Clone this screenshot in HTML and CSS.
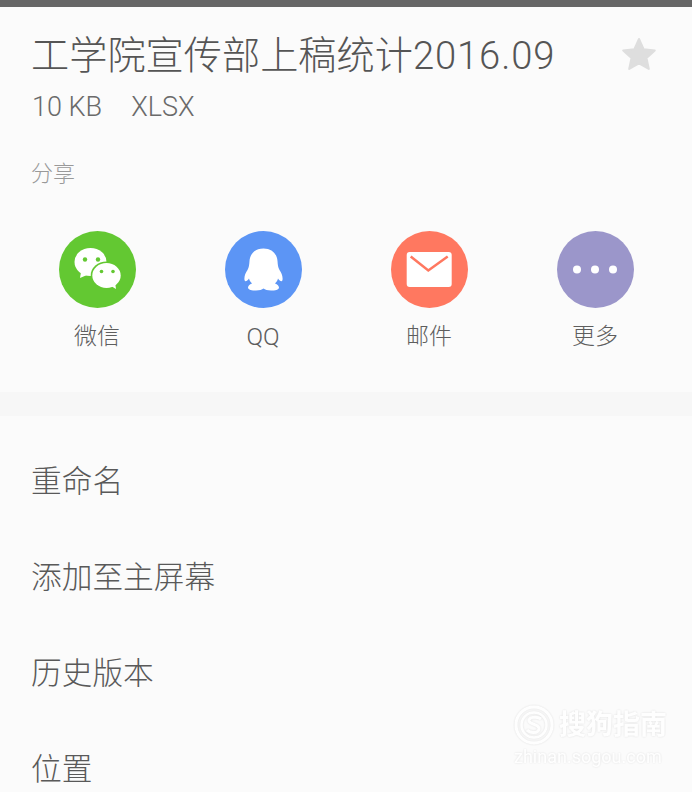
FILE: index.html
```html
<!DOCTYPE html>
<html lang="zh-CN">
<head>
<meta charset="utf-8">
<title>文件详情</title>
<link rel="stylesheet" href="styles.css">
</head>
<body>
<div class="sheet">
  <header class="head">
    <div class="title-row">
      <h1 class="title">工学院宣传部上稿统计<span class="title-num">2016.09</span></h1>
      <svg class="star" viewBox="0 0 36 36"><path d="M18 3l4.600 10.200 11.200 1.200-8.300 7.500 2.300 11-9.800-5.600-9.800 5.600 2.300-11-8.300-7.500 11.200-1.200z" fill="#dedede" stroke="#dedede" stroke-width="2" stroke-linejoin="round"/></svg>
    </div>
    <div class="meta"><span>10 KB</span><span>XLSX</span></div>
  </header>
  <section class="share">
    <div class="share-label">分享</div>
    <div class="share-grid">
      <div class="share-item">
        <svg class="share-icon" viewBox="0 0 77 77">
          <circle cx="38.500" cy="38.500" r="38.500" fill="#63c832"/>
          <ellipse cx="31.500" cy="31" rx="16" ry="14" fill="#fff"/>
          <path d="M22 41l-1 6 7-3z" fill="#fff"/>
          <ellipse cx="47.500" cy="44.500" rx="15.800" ry="14" fill="#63c832"/>
          <ellipse cx="47.500" cy="44.500" rx="14.200" ry="12.500" fill="#fff"/>
          <path d="M52 55l5 3-1-7z" fill="#fff"/>
          <circle cx="26" cy="28.500" r="2.200" fill="#63c832"/>
          <circle cx="39" cy="28.500" r="2.200" fill="#63c832"/>
          <circle cx="42.500" cy="40.500" r="1.800" fill="#63c832"/>
          <circle cx="54" cy="40.500" r="1.800" fill="#63c832"/>
        </svg>
        <span class="share-name">微信</span>
      </div>
      <div class="share-item">
        <svg class="share-icon" viewBox="0 0 77 77">
          <circle cx="38.500" cy="38.500" r="38.500" fill="#5c95f5"/>
          <path d="M38.500 17.500C30 17.500 25 23 24.500 30C24.200 34 24 36 22.500 39C20.500 42 19 45 19.500 49C20 51 22 50.500 24 47.500C24.500 49.500 25.500 51 27 52.500C24.500 53.500 23 55 23 56.500C23 59 27 59.500 31 59.500C34.500 59.500 37 58.500 38.500 57.500C40 58.500 42.500 59.500 46 59.500C50 59.500 54 59 54 56.500C54 55 52.500 53.500 50 52.500C51.500 51 52.500 49.500 53 47.500C55 50.500 57 51 57.500 49C58 45 56.500 42 54.500 39C53 36 52.800 34 52.500 30C52 23 47 17.500 38.500 17.500Z" fill="#fff"/>
        </svg>
        <span class="share-name share-name-latin">QQ</span>
      </div>
      <div class="share-item">
        <svg class="share-icon" viewBox="0 0 77 77">
          <circle cx="38.500" cy="38.500" r="38.500" fill="#ff7860"/>
          <rect x="15.700" y="21" width="45" height="35" rx="3" fill="#fff"/>
          <path d="M19.700 25.500l17.600 14 19.400-14" fill="none" stroke="#ff7860" stroke-width="2.500"/>
        </svg>
        <span class="share-name">邮件</span>
      </div>
      <div class="share-item">
        <svg class="share-icon" viewBox="0 0 77 77">
          <circle cx="38.500" cy="38.500" r="38.500" fill="#9b96ca"/>
          <circle cx="20" cy="38.500" r="4" fill="#fff"/>
          <circle cx="38" cy="38.500" r="4" fill="#fff"/>
          <circle cx="56" cy="38.500" r="4" fill="#fff"/>
        </svg>
        <span class="share-name">更多</span>
      </div>
    </div>
  </section>
  <ul class="menu">
    <li>重命名</li>
    <li>添加至主屏幕</li>
    <li>历史版本</li>
    <li>位置</li>
  </ul>
</div>
<div class="watermark">
  <div class="wm-top">
    <svg class="wm-logo" viewBox="0 0 40 40"><circle cx="20" cy="20" r="18" fill="none" stroke="#fff" stroke-width="3"/><circle cx="20" cy="20" r="12.500" fill="none" stroke="#fff" stroke-width="2.500"/><path d="M27 14c-4-3-13-2-12 2s11 3 10 8-9 4-12 1" fill="none" stroke="#fff" stroke-width="3"/></svg>
    <span class="wm-cn">搜狗指南</span>
  </div>
  <div class="wm-url">zhinan.sogou.com</div>
</div>
</body>
</html>
```
FILE: styles.css
```css
* { box-sizing: border-box; }
html, body { margin: 0; padding: 0; }
body {
  position: relative;
  width: 692px;
  height: 792px;
  overflow: hidden;
  background: #fbfbfb;
  font-family: Roboto, "Noto Sans CJK SC", sans-serif;
  font-weight: 300;
  color: #646464;
}
.sheet { border-top: 7px solid #666; }
.head { padding: 0 35px 0 31px; }
.title-row {
  display: flex;
  justify-content: space-between;
  align-items: center;
  height: 81px;
  padding-top: 11px;
}
.title {
  margin: 6px 0 0;
  font-size: 38.200px;
  font-weight: 300;
  line-height: 50px;
  white-space: nowrap;
  color: #555;
}
.title-num { letter-spacing: .9px; }
.star { width: 36px; height: 36px; flex: none; margin-top: 2px; }
.meta {
  display: flex;
  gap: 29px;
  padding-left: 1px;
  font-size: 27px;
  line-height: 38px;
  height: 36px;
  color: #6a6a6a;
}
.share { height: 268px; }
.share-label {
  padding: 34px 31px 0;
  font-size: 22px;
  line-height: 32px;
  color: #999;
}
.share-grid {
  display: grid;
  grid-template-columns: repeat(4, 166px);
  padding: 0 14px;
  margin-top: 41px;
}
.share-item { display: flex; flex-direction: column; align-items: center; }
.share-icon { width: 77px; height: 77px; display: block; }
.share-name { margin-top: 12px; font-size: 23px; line-height: 34px; color: #5e5e5e; }
.share-name-latin { font-size: 24.500px; }
.menu {
  list-style: none;
  margin: 0;
  padding: 18px 0 0;
  border-top: 24px solid #f7f7f7;
}
.menu li {
  height: 96px;
  padding-left: 31px;
  font-size: 30.700px;
  line-height: 96px;
  color: #595959;
}
.watermark {
  position: absolute;
  left: 514px;
  top: 705px;
  width: 156px;
  color: #fff;
  opacity: .9;
  filter: drop-shadow(0 0 1px rgba(0, 0, 0, .12));
}
.wm-top { display: flex; align-items: center; gap: 5px; }
.wm-logo { width: 40px; height: 40px; flex: none; }
.wm-cn { font-size: 27px; line-height: 40px; font-weight: 700; white-space: nowrap; }
.wm-url { font-size: 18px; line-height: 24px; font-weight: 400; white-space: nowrap; }
```
